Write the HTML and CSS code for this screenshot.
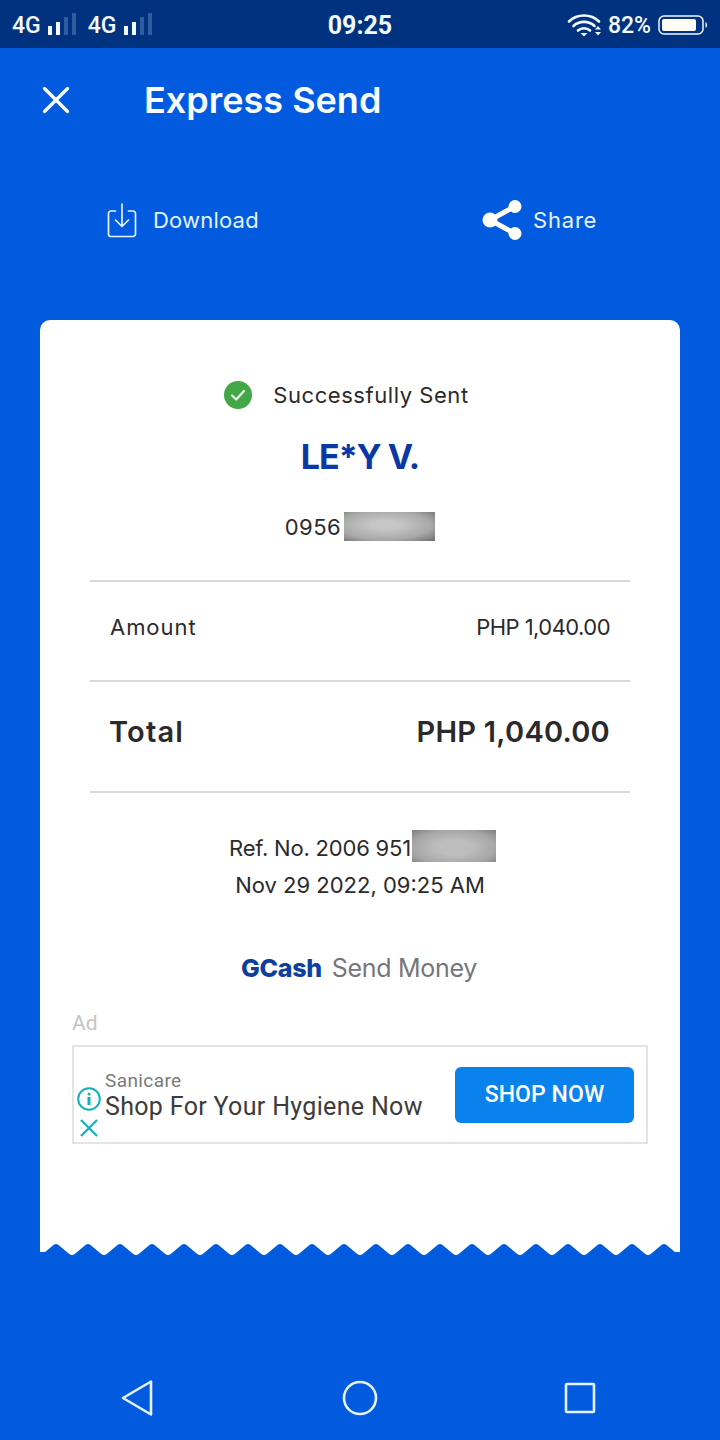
FILE: index.html
```html
<!DOCTYPE html>
<html lang="en">
<head>
<meta charset="utf-8">
<title>Express Send</title>
<link rel="stylesheet" href="styles.css">
</head>
<body>
<div class="status">
  <div class="status-left">
    <span>4G</span>
    <svg class="signal" width="28" height="26" viewBox="0 0 28 26"><rect x="0" y="14" width="4" height="9" fill="#f4f8ff"/><rect x="8" y="10" width="4" height="13" fill="#f4f8ff"/><rect x="16" y="5" width="4" height="18" fill="#2f5b9f"/><rect x="24" y="1" width="4" height="22" fill="#2f5b9f"/></svg>
    <span class="second">4G</span>
    <svg class="signal" width="28" height="26" viewBox="0 0 28 26"><rect x="0" y="14" width="4" height="9" fill="#f4f8ff"/><rect x="8" y="10" width="4" height="13" fill="#f4f8ff"/><rect x="16" y="5" width="4" height="18" fill="#2f5b9f"/><rect x="24" y="1" width="4" height="22" fill="#2f5b9f"/></svg>
  </div>
  <div class="status-time">09:25</div>
  <div class="status-right">
    <svg class="wifi" width="36" height="26" viewBox="0 0 36 26" fill="none" stroke="#f4f8ff" stroke-width="2.600" stroke-linecap="round"><path d="M2 9.500C10 1.500 24 1.500 32 9.500"/><path d="M6.500 14C12 8.500 22 8.500 27.500 14"/><path d="M11 18.500C14 15.500 20 15.500 23 18.500"/><path d="M13.500 21L17 24.500L20.500 21Z" fill="#f4f8ff" stroke="none"/><path d="M28 17.500h6l-3-3.500ZM28 20h6l-3 3.500Z" fill="#f4f8ff" stroke="none"/></svg>
    <span class="pct">82%</span>
    <svg width="50" height="22" viewBox="0 0 50 22"><rect x="1" y="2" width="44" height="18" rx="5" fill="none" stroke="#f4f8ff" stroke-width="1.500"/><rect x="4" y="5" width="34" height="12" rx="2" fill="#fffdf5"/><path d="M47.500 8c2 1 2 5 0 6Z" fill="#f4f8ff"/></svg>
  </div>
</div>

<header class="topbar">
  <svg class="close" width="28" height="28" viewBox="0 0 28 28" fill="none" stroke="#fff" stroke-width="3.200" stroke-linecap="round"><path d="M2.500 2.500L25.500 25.500M25.500 2.500L2.500 25.500"/></svg>
  <h1 class="title">Express Send</h1>
</header>

<div class="actions">
  <div class="action action-download">
    <svg width="30" height="36" viewBox="0 0 30 36" fill="none" stroke="#e4f3ff" stroke-width="1.700" stroke-linecap="round" stroke-linejoin="round"><path d="M8.500 9H4a2.500 2.500 0 0 0-2.500 2.500V32A2.500 2.500 0 0 0 4 34.500H26a2.500 2.500 0 0 0 2.500-2.500V11.500A2.500 2.500 0 0 0 26 9H21.500"/><path d="M15 2V24M8.500 18L15 24.500L21.500 18"/></svg>
    <span>Download</span>
  </div>
  <div class="action action-share">
    <svg width="42" height="42" viewBox="0 0 42 42" fill="#fffdf5" stroke="#fffdf5"><path d="M33 7.500L8 21L33 34.500" fill="none" stroke-width="5"/><circle cx="33" cy="7.500" r="6.500" stroke="none"/><circle cx="8" cy="21" r="7.500" stroke="none"/><circle cx="33" cy="34.500" r="6.500" stroke="none"/></svg>
    <span>Share</span>
  </div>
</div>

<main class="receipt">
  <div class="receipt-body">
    <div class="success">
      <svg width="30" height="30" viewBox="0 0 30 30"><circle cx="15" cy="15" r="14" fill="#43a748"/><path d="M9 15.500L13.200 19.500L21 11" fill="none" stroke="#e8f8e8" stroke-width="2.200" stroke-linecap="round" stroke-linejoin="round"/></svg>
      <span>Successfully Sent</span>
    </div>
    <div class="name">LE*Y V.</div>
    <div class="phone"><span>0956</span><i class="blur blur-phone"></i></div>
    <div class="divider"></div>
    <div class="row row-amount"><span>Amount</span><span class="amount-val">PHP 1,040.00</span></div>
    <div class="divider"></div>
    <div class="row row-total"><span class="total-label">Total</span><span class="total-val">PHP 1,040.00</span></div>
    <div class="divider"></div>
    <div class="ref"><span class="ref-text">Ref. No. 2006 951</span><i class="blur blur-ref"></i></div>
    <div class="date">Nov 29 2022, 09:25 AM</div>
    <div class="brand"><b>GCash</b><span>Send Money</span></div>
    <div class="ad-label">Ad</div>
    <div class="ad">
      <div class="ad-icons">
        <svg width="26" height="26" viewBox="0 0 26 26" fill="none"><circle cx="13" cy="13" r="10.800" stroke="#12b0bd" stroke-width="2"/><rect x="11.500" y="11" width="3" height="8" fill="#12b0bd"/><rect x="11.500" y="6.500" width="3" height="3" rx="1.500" fill="#12b0bd"/></svg>
        <svg width="20" height="20" viewBox="0 0 20 20" fill="none" stroke="#12b0bd" stroke-width="2.200"><path d="M2 2L18 18M18 2L2 18"/></svg>
      </div>
      <div class="ad-text">
        <div class="ad-sponsor">Sanicare</div>
        <div class="ad-head">Shop For Your Hygiene Now</div>
      </div>
      <div class="ad-btn">SHOP NOW</div>
    </div>
  </div>
  <svg class="wave" width="640" height="12" viewBox="0 0 640 12">
    <defs><pattern id="scallop" width="32" height="12" patternUnits="userSpaceOnUse"><path fill="#fff" d="M0 0H32V12Q30.500 12 29 10.800L18.500 2Q16 0 13.500 2L3 10.800Q1.500 12 0 12Z"/></pattern></defs>
    <rect width="640" height="12" fill="url(#scallop)"/>
    <path fill="#025bdf" d="M0 9H5V12H0ZM635 9H640V12H635Z"/>
  </svg>
</main>

<nav class="navbar">
  <svg width="36" height="40" viewBox="0 0 36 40" fill="none" stroke="#e4f3ff" stroke-width="2.600" stroke-linejoin="round"><path d="M31 3.500V36.500L3 20Z"/></svg>
  <svg width="36" height="36" viewBox="0 0 36 36" fill="none" stroke="#e4f3ff" stroke-width="2.600"><circle cx="18" cy="18" r="16"/></svg>
  <svg width="32" height="32" viewBox="0 0 32 32" fill="none" stroke="#e4f3ff" stroke-width="2.600" stroke-linejoin="round"><rect x="2" y="2" width="28" height="28" rx="1"/></svg>
</nav>
</body>
</html>
```
FILE: styles.css
```css
* { box-sizing: border-box; }
html, body { margin: 0; padding: 0; }
body {
  width: 720px;
  height: 1440px;
  overflow: hidden;
  background: #025bdf;
  font-family: "Inter", "Liberation Sans", sans-serif;
  color: #2a2a2c;
}
.status {
  height: 48px;
  background: #00327f;
  color: #f4f8ff;
  display: grid;
  grid-template-columns: 1fr auto 1fr;
  align-items: center;
  font-family: "Roboto", sans-serif;
  font-weight: 500;
  font-size: 23px;
  padding: 2px 12px 0;
}
.status-left { display: flex; align-items: center; }
.status-left span { margin-right: 7px; }
.status-left .second { margin-left: 12px; }
.status-time { font-size: 25px; font-weight: 700; }
.status-right { display: flex; align-items: center; justify-content: flex-end; }
.wifi { margin-right: 5px; }
.pct { margin-right: 7px; }
.topbar {
  height: 104px;
  display: flex;
  align-items: center;
  padding: 0 0 0 42px;
}
.close { flex: none; margin-right: 74px; }
.title {
  margin: 0;
  color: #f8fcff;
  font-size: 36px;
  font-weight: 600;
}
.actions {
  height: 84px;
  margin-top: 26px;
  display: flex;
  align-items: center;
  color: #e4f3ff;
  font-size: 22px;
  letter-spacing: 0.8px;
}
.action { display: flex; align-items: center; }
.action-download { margin-left: 107px; gap: 16px; width: 375px; letter-spacing: 0.2px; }
.action-share { gap: 9px; }
.receipt { margin: 58px 40px 0; width: 640px; }
.receipt-body {
  height: 923px;
  background: #fff;
  border-radius: 10px 10px 0 0;
  padding-top: 60px;
  text-align: center;
}
.wave { display: block; }
.success {
  height: 30px;
  display: flex;
  align-items: center;
  justify-content: center;
  gap: 20px;
  font-size: 22px;
  letter-spacing: 0.55px;
  padding-right: 28px;
}
.name {
  height: 36px;
  line-height: 36px;
  margin-top: 29px;
  font-size: 34px;
  font-weight: 700;
  letter-spacing: -1px;
  color: #0a38a4;
}
.phone {
  height: 29px;
  margin-top: 37px;
  display: flex;
  align-items: center;
  justify-content: center;
  gap: 3px;
  font-size: 22px;
  letter-spacing: 0.5px;
}
.blur { display: block; }
.blur-phone {
  width: 91px;
  height: 29px;
  background: radial-gradient(ellipse at 45% 45%, #c6c6c6 20%, #a8a8a8 65%, #6c6c6c 100%);
}
.blur-ref {
  width: 84px;
  height: 32px;
  background: radial-gradient(ellipse at 50% 55%, #bdbdbd 30%, #a6a6a6 70%, #7f7f7f 100%);
}
.divider { height: 2px; margin: 0 50px; background: #d9d9d9; }
.phone + .divider { margin-top: 39px; }
.row {
  display: flex;
  justify-content: space-between;
  align-items: center;
  padding: 0 70px;
}
.row-amount { height: 98px; padding-bottom: 9px; font-size: 22px; letter-spacing: 0.95px; }
.amount-val { letter-spacing: -0.55px; }
.row-total { height: 109px; padding-bottom: 10px; font-size: 29px; font-weight: 600; }
.total-label { letter-spacing: 1.2px; margin-left: -1px; }
.total-val { letter-spacing: 0.25px; }
.ref {
  height: 32px;
  margin-top: 37px;
  padding-left: 5px;
  display: flex;
  align-items: center;
  justify-content: center;
  gap: 1px;
  font-size: 22px;
}
.ref-text { letter-spacing: -0.2px; padding-top: 3px; }
.date { height: 32px; line-height: 32px; margin-top: 7px; font-size: 22px; }
.brand {
  height: 36px;
  margin-top: 49px;
  display: flex;
  align-items: center;
  justify-content: center;
  gap: 10px;
  font-size: 25px;
  letter-spacing: -0.3px;
  color: #76767a;
  padding-right: 2px;
}
.brand b { color: #0d3fa0; font-weight: 800; letter-spacing: -0.3px; }
.ad-label {
  margin: 23px 0 0 32px;
  height: 28px;
  line-height: 28px;
  text-align: left;
  color: #c4c4c4;
  font-family: "Roboto", sans-serif;
  font-size: 21px;
}
.ad {
  margin: 8px 32px 0;
  height: 99px;
  border: 2px solid #e4e4e4;
  display: flex;
  align-items: center;
  text-align: left;
}
.ad-icons {
  width: 31px;
  height: 56px;
  margin-top: 38px;
  padding-right: 1px;
  display: flex;
  flex-direction: column;
  align-items: center;
  flex: none;
}
.ad-icons svg + svg { margin-top: 6px; }
.ad-text { flex: 1; font-family: "Roboto", sans-serif; margin-top: 3px; }
.ad-sponsor { font-size: 19px; line-height: 22px; letter-spacing: 0.4px; color: #7a7a7a; }
.ad-head { font-size: 25px; line-height: 30px; letter-spacing: 0.33px; color: #3c3c3c; }
.ad-btn {
  width: 179px;
  height: 56px;
  margin: 0 12px 0 0;
  background: #0a82ee;
  border-radius: 6px;
  color: #fff;
  font-family: "Roboto", sans-serif;
  font-weight: 500;
  font-size: 23px;
  letter-spacing: 0.1px;
  display: flex;
  align-items: center;
  justify-content: center;
}
.navbar {
  height: 60px;
  margin-top: 113px;
  display: flex;
  align-items: center;
  padding-left: 120px;
  gap: 186px;
}
```
